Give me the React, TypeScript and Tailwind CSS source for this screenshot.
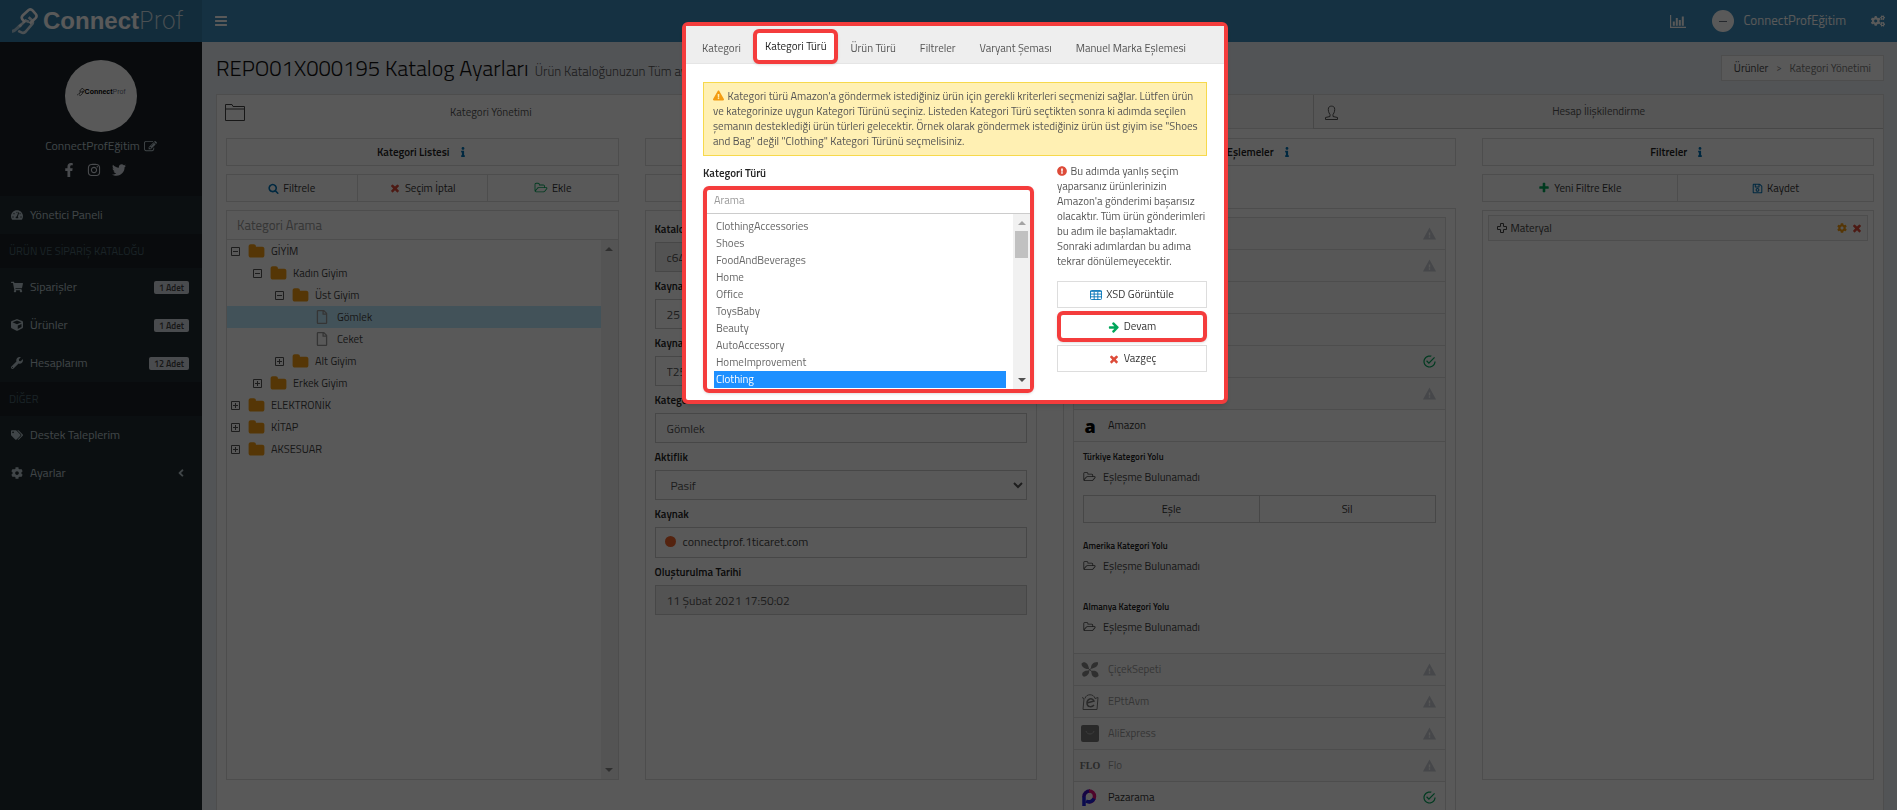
import { useState } from "react";
import type { ReactNode } from "react";
import {
  FaAngleLeft,
  FaCog,
  FaCogs,
  FaCube,
  FaExclamationCircle,
  FaExclamationTriangle,
  FaFacebookF,
  FaInfo,
  FaInstagram,
  FaRegFile,
  FaRegSave,
  FaShoppingCart,
  FaSyncAlt,
  FaTachometerAlt,
  FaTags,
  FaTwitter,
  FaWrench,
} from "react-icons/fa";
import { IoMdCheckmarkCircleOutline, IoMdWarning } from "react-icons/io";

const ICONS = {
  times:
    "M1490 1322q0 40-28 68l-136 136q-28 28-68 28t-68-28l-294-294-294 294q-28 28-68 28t-68-28l-136-136q-28-28-28-68t28-68l294-294-294-294q-28-28-28-68t28-68l136-136q28-28 68-28t68 28l294 294 294-294q28-28 68-28t68 28l136 136q28 28 28 68t-28 68l-294 294 294 294q28 28 28 68z",
  search:
    "M1216 832q0-185-131.5-316.5t-316.5-131.5-316.5 131.5-131.5 316.5 131.5 316.5 316.5 131.5 316.5-131.5 131.5-316.5zm512 832q0 52-38 90t-90 38q-54 0-90-38l-343-342q-179 124-399 124-143 0-273.5-55.5t-225-150-150-225-55.5-273.5 55.5-273.5 150-225 225-150 273.5-55.5 273.5 55.5 225 150 150 225 55.5 273.5q0 220-124 399l343 343q37 37 37 90z",
  folderOpen:
    "M1845 931q0-35-53-35h-1088q-40 0-85.5 21.5t-71.5 52.5l-294 363q-18 24-18 40 0 35 53 35h1088q40 0 86-22t71-53l294-363q18-22 18-39zm-1141-163h768v-160q0-40-28-68t-68-28h-576q-40 0-68-28t-28-68v-64q0-40-28-68t-68-28h-320q-40 0-68 28t-28 68v853l256-315q44-53 116-87.5t140-34.5zm1269 163q0 62-46 120l-295 363q-43 53-116 87.5t-140 34.5h-1088q-92 0-158-66t-66-158v-960q0-92 66-158t158-66h320q92 0 158 66t66 158v32h544q92 0 158 66t66 158v160h192q54 0 99 24.5t67 70.5q15 32 15 68z",
  folder:
    "M1728 608v704q0 92-66 158t-158 66h-1216q-92 0-158-66t-66-158v-960q0-92 66-158t158-66h320q92 0 158 66t66 158v32h672q92 0 158 66t66 158z",
  plus: "M1600 736v192q0 40-28 68t-68 28h-416v416q0 40-28 68t-68 28h-192q-40 0-68-28t-28-68v-416h-416q-40 0-68-28t-28-68v-192q0-40 28-68t68-28h416v-416q0-40 28-68t68-28h192q40 0 68 28t28 68v416h416q40 0 68 28t28 68z",
  arrowRight:
    "M1600 960q0 54-37 91l-651 651q-39 37-91 37-51 0-90-37l-75-75q-38-38-38-91t38-91l293-293h-704q-52 0-84.5-37.5t-32.5-90.5v-128q0-53 32.5-90.5t84.5-37.5h704l-293-294q-38-36-38-90t38-90l75-75q38-38 90-38 53 0 91 38l651 651q37 35 37 90z",
  edit: "M888 1184l116-116-152-152-116 116v56h96v96h56zm440-720q-16-16-33 1l-350 350q-17 17-1 33t33-1l350-350q17-17 1-33zm80 594v190q0 119-84.5 203.5t-203.5 84.5h-832q-119 0-203.5-84.5t-84.5-203.5v-832q0-119 84.5-203.5t203.5-84.5h832q63 0 117 25 15 7 18 23 3 17-9 29l-49 49q-14 14-32 8-23-6-45-6h-832q-66 0-113 47t-47 113v832q0 66 47 113t113 47h832q66 0 113-47t47-113v-126q0-13 9-22l64-64q15-15 35-7t20 29zm-96-738l288 288-672 672h-288v-288zm444 132l-92 92-288-288 92-92q28-28 68-28t68 28l152 152q28 28 28 68t-28 68z",
  bars: "M1664 1344v128q0 26-19 45t-45 19h-1408q-26 0-45-19t-19-45v-128q0-26 19-45t45-19h1408q26 0 45 19t19 45zm0-512v128q0 26-19 45t-45 19h-1408q-26 0-45-19t-19-45v-128q0-26 19-45t45-19h1408q26 0 45 19t19 45zm0-512v128q0 26-19 45t-45 19h-1408q-26 0-45-19t-19-45v-128q0-26 19-45t45-19h1408q26 0 45 19t19 45z",
};

function Icon({ name, className }: { name: keyof typeof ICONS; className: string }) {
  return (
    <svg
      viewBox={name === "folderOpen" ? "0 0 2048 1792" : "0 0 1792 1792"}
      className={`shrink-0 fill-current ${className}`}
    >
      <path d={ICONS[name]} />
    </svg>
  );
}

function TableIcon() {
  return (
    <svg viewBox="0 0 13 11" className="h-[10px] w-[12px] text-[#0073b7]" fill="none" stroke="currentColor">
      <rect x=".5" y=".5" width="12" height="10" rx="1" />
      <path d="M0 1.500h13M0 4.500h13M0 7.500h13M4.500 2v9M8.500 2v9" />
    </svg>
  );
}

function ChartIcon() {
  return (
    <svg viewBox="0 0 16 13" className="h-[13px] w-4 fill-current">
      <path d="M0 0h1.200v11.800H16V13H0zM2.800 6.500h2v4.300h-2zM5.800 3h2v7.800h-2zM8.800 5h2v5.800h-2zM11.800 1.500h2v9.300h-2z" />
    </svg>
  );
}

function ChainMark({ className }: { className: string }) {
  return (
    <svg viewBox="0 0 26 26" className={`shrink-0 ${className}`} fill="none" stroke="currentColor" strokeWidth="2.500">
      <path d="M0 22.500c4-.5 5-4 9-6.500" strokeWidth="3" opacity=".6" />
      <path d="M12.500 14l-2.500-3q-1.500-2 .5-4L16 2q2-1.500 4 .5l3 3.500q1.500 2-.5 4l-5.500 5" />
      <path d="M16 9l3.500 3q1.500 2-.5 4l-6 7q-2 1.500-4 .5l-3-1.500M7 18l6-6 3.500 1.500" opacity=".8" />
    </svg>
  );
}

interface MenuItem {
  icon: ReactNode;
  label: string;
  badge?: string;
  arrow?: boolean;
}

const catalogMenu: MenuItem[] = [
  { icon: <FaShoppingCart />, label: "Siparişler", badge: "1 Adet" },
  { icon: <FaCube />, label: "Ürünler", badge: "1 Adet" },
  { icon: <FaWrench />, label: "Hesaplarım", badge: "12 Adet" },
];

const otherMenu: MenuItem[] = [
  { icon: <FaTags />, label: "Destek Taleplerim" },
  { icon: <FaCog />, label: "Ayarlar", arrow: true },
];

function MenuLink({ icon, label, badge, arrow }: MenuItem) {
  return (
    <a href="#" className="flex h-[38px] items-center gap-[7px] pl-[11px] pr-[13px] text-[12px] text-[#b8c7ce]">
      {icon}
      <span className="flex-1">{label}</span>
      {badge && (
        <span className="rounded-xs bg-[#d2d6de] px-[5px] text-[9px] leading-[13px] font-semibold text-[#444]">
          {badge}
        </span>
      )}
      {arrow && <FaAngleLeft className="mr-[2px]" />}
    </a>
  );
}

function Sidebar() {
  return (
    <aside className="w-[202px] shrink-0 bg-[#222d32]">
      <div className="flex h-[154px] flex-col items-center bg-[#1a2226] pt-[18px] text-[#b8c7ce]">
        <div className="flex size-[72px] items-center justify-center rounded-full bg-white pb-2 font-['Liberation_Sans'] text-[7px] text-gray-500">
          <ChainMark className="size-[8px] text-black" />
          <span>
            <b className="text-black">Connect</b>Prof
          </span>
        </div>
        <a href="#" className="mt-[6px] flex items-center gap-1 text-[12px] leading-4">
          ConnectProfEğitim
          <Icon name="edit" className="size-[13px]" />
        </a>
        <div className="mt-[9px] mr-[14px] flex items-center gap-[11px] text-[14px] text-[#d2d6de]">
          <a href="#" aria-label="Facebook"><FaFacebookF /></a>
          <a href="#" aria-label="Instagram"><FaInstagram /></a>
          <a href="#" aria-label="Twitter"><FaTwitter /></a>
        </div>
      </div>
      <nav>
        <MenuLink icon={<FaTachometerAlt />} label="Yönetici Paneli" />
        <div className="flex h-[34px] items-center bg-[#1a2226] pl-[9px] text-[11px] text-[#4b646f]">
          ÜRÜN VE SİPARİŞ KATALOĞU
        </div>
        {catalogMenu.map((item) => (
          <MenuLink key={item.label} {...item} />
        ))}
        <div className="flex h-[34px] items-center bg-[#1a2226] pl-[9px] text-[11px] text-[#4b646f]">
          DİĞER
        </div>
        {otherMenu.map((item) => (
          <MenuLink key={item.label} {...item} />
        ))}
      </nav>
    </aside>
  );
}

function TopBar() {
  return (
    <header className="flex h-[42px] shrink-0 bg-[#3c8dbc] text-white">
      <a href="#" className="flex w-[202px] shrink-0 items-center gap-1 bg-[#367fa9] pl-3 text-[24px]">
        <ChainMark className="size-[27px]" />
        <span className="font-['Liberation_Sans']">
          <b>Connect</b>
          <span className="font-['Inter'] text-[24px] font-extralight opacity-80">Prof</span>
        </span>
      </a>
      <div className="flex flex-1 items-center px-3">
        <button aria-label="Menü">
          <Icon name="bars" className="size-[14px]" />
        </button>
        <div className="ml-auto flex items-center text-[13px]">
          <ChartIcon />
          <span className="ml-[26px] flex size-[22px] items-center justify-center rounded-full bg-white">
            <span className="h-px w-2 bg-gray-500" />
          </span>
          <span className="ml-[9px]">ConnectProfEğitim</span>
          <FaCogs className="ml-[25px] text-[14px]" />
        </div>
      </div>
    </header>
  );
}

function ColumnTitle({ children }: { children?: ReactNode }) {
  return (
    <h3 className="flex h-[28px] items-center justify-center gap-2 border border-[#ddd] text-[11px] font-semibold text-[#222]">
      {children}
      <FaInfo className="text-[10px] text-[#0073b7]" />
    </h3>
  );
}

function ButtonRow({ children }: { children: ReactNode }) {
  return <div className="mt-2 flex h-[28px] divide-x divide-[#ddd] border border-[#ddd]">{children}</div>;
}

function RowButton({ children }: { children?: ReactNode }) {
  return (
    <button className="flex flex-1 items-center justify-center gap-1 text-[11px] text-[#333]">{children}</button>
  );
}

interface TreeNode {
  label: string;
  depth: number;
  kind: "open" | "closed" | "file";
  selected?: boolean;
}

const tree: TreeNode[] = [
  { label: "GİYİM", depth: 0, kind: "open" },
  { label: "Kadın Giyim", depth: 1, kind: "open" },
  { label: "Üst Giyim", depth: 2, kind: "open" },
  { label: "Gömlek", depth: 3, kind: "file", selected: true },
  { label: "Ceket", depth: 3, kind: "file" },
  { label: "Alt Giyim", depth: 2, kind: "closed" },
  { label: "Erkek Giyim", depth: 1, kind: "closed" },
  { label: "ELEKTRONİK", depth: 0, kind: "closed" },
  { label: "KİTAP", depth: 0, kind: "closed" },
  { label: "AKSESUAR", depth: 0, kind: "closed" },
];

function TreeRow({ label, depth, kind, selected }: TreeNode) {
  return (
    <li
      className={`flex h-[22px] items-center text-[11px] text-[#444] ${selected ? "bg-[#beebff]" : ""}`}
      style={{ paddingLeft: 4 + depth * 22 }}
    >
      {kind === "file" ? (
        <FaRegFile className="ml-[18px] mr-[8px] text-[14px] text-[#999]" />
      ) : (
        <>
          <svg viewBox="0 0 9 9" className="mr-2 size-[9px]" fill="none" stroke="#555">
            <path d={kind === "open" ? "M.5.5h8v8h-8zM2 4.500h5" : "M.5.5h8v8h-8zM2 4.500h5M4.500 2v5"} />
          </svg>
          <Icon name="folder" className="mr-[6px] size-[17px] text-[#f39c12]" />
        </>
      )}
      {label}
    </li>
  );
}

function Arrow({ up, className }: { up?: boolean; className: string }) {
  return (
    <svg viewBox="0 0 8 4" className={`h-1 w-2 fill-current ${className}`}>
      <path d={up ? "M0 4l4-4 4 4z" : "M0 0l4 4 4-4z"} />
    </svg>
  );
}

function CategoryColumn() {
  return (
    <section>
      <ColumnTitle>Kategori Listesi</ColumnTitle>
      <ButtonRow>
        <RowButton><Icon name="search" className="size-[11px] text-[#0073b7]" />Filtrele</RowButton>
        <RowButton><Icon name="times" className="size-[12px] text-[#dd4b39]" />Seçim İptal</RowButton>
        <RowButton><Icon name="folderOpen" className="h-[12px] w-[14px] text-[#00a65a]" />Ekle</RowButton>
      </ButtonRow>
      <input
        aria-label="Kategori Arama"
        placeholder="Kategori Arama"
        className="mt-2 block h-[30px] w-full border border-[#ddd] px-[10px] text-[13px] placeholder:text-[#999]"
      />
      <div className="flex h-[540px] border border-t-0 border-[#ddd]">
        <ul className="flex-1">
          {tree.map((node) => (
            <TreeRow key={node.label} {...node} />
          ))}
        </ul>
        <div className="flex w-[17px] flex-col items-center justify-between bg-[#f1f1f1] py-[7px]">
          <Arrow up className="text-[#888]" />
          <Arrow className="text-[#888]" />
        </div>
      </div>
    </section>
  );
}

const inputClass = "block h-[30px] w-full border border-[#ccc] px-[11px] text-[12px] text-[#555]";

function Field({ id, label, children }: { id: string; label: string; children: ReactNode }) {
  return (
    <div className="mb-[7px]">
      <label htmlFor={id} className="mb-[6px] block text-[11px] leading-[14px] font-semibold text-[#222]">
        {label}
      </label>
      {children}
    </div>
  );
}

function DetailColumn() {
  return (
    <section>
      <ColumnTitle />
      <ButtonRow>
        <RowButton><FaSyncAlt className="text-[#0073b7]" />Güncelle</RowButton>
        <RowButton />
        <RowButton />
      </ButtonRow>
      <form className="mt-2 h-[570px] border border-[#ddd] px-[9px] pt-[11px]">
        <Field id="katalog" label="Katalog">
          <input id="katalog" readOnly value="c64" className={`${inputClass} bg-[#eee]`} />
        </Field>
        <Field id="kaynak-id" label="Kaynak">
          <input id="kaynak-id" defaultValue="25" className={inputClass} />
        </Field>
        <Field id="kaynak-kod" label="Kaynak">
          <input id="kaynak-kod" defaultValue="T25" className={inputClass} />
        </Field>
        <Field id="kategori" label="Kategori">
          <input id="kategori" defaultValue="Gömlek" className={inputClass} />
        </Field>
        <Field id="aktiflik" label="Aktiflik">
          <select id="aktiflik" className={`${inputClass} pr-0`}>
            <option>Pasif</option>
          </select>
        </Field>
        <Field id="kaynak" label="Kaynak">
          <div className="flex h-[31px] items-center gap-[7px] border border-[#ccc] px-[9px] pb-[2px] text-[12px] text-[#444]">
            <span className="size-[11px] rounded-full bg-[#f0642d]" />
            <output id="kaynak">connectprof.1ticaret.com</output>
          </div>
        </Field>
        <Field id="tarih" label="Oluşturulma Tarihi">
          <input id="tarih" readOnly value="11 Şubat 2021 17:50:02" className={`${inputClass} bg-[#eee]`} />
        </Field>
      </form>
    </section>
  );
}

interface MarketRowProps {
  name?: string;
  logo?: ReactNode;
  status?: "warn" | "ok";
  active?: boolean;
}

function MarketRow({ name, logo, status, active }: MarketRowProps) {
  return (
    <li
      className={`flex h-[32px] items-center border-b border-[#ddd] pl-[5px] pr-2 text-[11px] ${
        active ? "text-[#333]" : "bg-[#f9f9f9] text-[#999]"
      }`}
    >
      <span className="mr-[7px] flex size-[22px] items-center justify-center">{logo}</span>
      <span className="flex-1">{name}</span>
      {status === "warn" && <IoMdWarning className="text-[15px] text-[#c8ccd4]" />}
      {status === "ok" && <IoMdCheckmarkCircleOutline className="text-[15px] text-[#00a65a]" />}
    </li>
  );
}

function CategoryPath({ country }: { country: string }) {
  return (
    <>
      <h4 className="text-[9px] leading-[14px] font-semibold text-[#222]">{country} Kategori Yolu</h4>
      <p className="mt-[5px] flex items-center gap-[7px] text-[11px] leading-4 text-[#444]">
        <Icon name="folderOpen" className="h-[12px] w-[13px]" />
        Eşleşme Bulunamadı
      </p>
    </>
  );
}

function CicekLogo() {
  return (
    <svg viewBox="0 0 20 18" className="h-[17px] w-5 fill-[#888]">
      <path d="M9 8.500C4 9 1 6 1 3c2-3 7-2 8 5.500zM11 8c0-4 2-7 7-7 2 3-2 7-7 7zM9 10c1 4-3 7-6 6.500C0 14 2 9.500 9 10zM11.500 10.500c5-1 8 2 7.500 5.500-3 3-8 1-7.500-5.500z" />
      <path d="M7 7l6 5M12 7l-5 5" stroke="#888" />
    </svg>
  );
}

function PttLogo() {
  return (
    <svg viewBox="0 0 18 18" className="size-[18px]" fill="none" stroke="#777">
      <path d="M1 4.500l2 1-1 11h14l1-12-3 1C13 .5 5 .5 4 5.500" />
      <path d="M6 10l7-2c-2-4-7-2-7 2 0 4.500 5 4.500 7 2" strokeWidth="1.500" />
    </svg>
  );
}

function AliLogo() {
  return (
    <svg viewBox="0 0 18 17" className="h-[17px] w-[18px]" fill="none">
      <rect width="18" height="17" rx="2" fill="#777" />
      <path d="M5 6c1 4 7 4 8 0" stroke="#aaa" />
    </svg>
  );
}

function PazaramaLogo() {
  return (
    <svg viewBox="0 0 16 17" className="h-[17px] w-4" fill="none" strokeWidth="3.500">
      <path d="M2 17V7.500" stroke="#2020e0" />
      <path d="M2 8a6 5.500 0 016-6" stroke="#4010c0" />
      <path d="M7 2a5.500 5.500 0 010 11" stroke="#e0107a" />
      <path d="M12 9.500A5.500 5.500 0 014 12" stroke="#2020e0" />
    </svg>
  );
}

function MappingColumn() {
  return (
    <section>
      <ColumnTitle>Eşlemeler</ColumnTitle>
      <div className="mt-[42px] border border-[#ddd] px-[9px] pt-[8px]">
        <ul className="border border-[#ddd]">
          <MarketRow status="warn" />
          <MarketRow status="warn" />
          <MarketRow />
          <MarketRow />
          <MarketRow status="ok" />
          <MarketRow status="warn" />
          <MarketRow
            name="Amazon"
            active
            logo={<span className="font-['Open_Sans'] text-[18px] leading-none font-extrabold text-black">a</span>}
          />
          <li className="border-b border-[#ddd] px-[9px] pt-[8px] pb-[18px]">
            <CategoryPath country="Türkiye" />
            <div className="mt-[10px] mb-4 flex h-[28px] divide-x divide-[#ccc] border border-[#ccc]">
              <RowButton>Eşle</RowButton>
              <RowButton>Sil</RowButton>
            </div>
            <CategoryPath country="Amerika" />
            <div className="h-[26px]" />
            <CategoryPath country="Almanya" />
          </li>
          <MarketRow name="ÇiçekSepeti" logo={<CicekLogo />} status="warn" />
          <MarketRow name="EPttAvm" logo={<PttLogo />} status="warn" />
          <MarketRow name="AliExpress" logo={<AliLogo />} status="warn" />
          <MarketRow
            name="Flo"
            status="warn"
            logo={<span className="font-['Liberation_Serif'] text-[10px] font-bold text-[#777]">FLO</span>}
          />
          <MarketRow name="Pazarama" logo={<PazaramaLogo />} status="ok" active />
        </ul>
      </div>
    </section>
  );
}

function FilterColumn() {
  return (
    <section>
      <ColumnTitle>Filtreler</ColumnTitle>
      <ButtonRow>
        <RowButton><Icon name="plus" className="size-[12px] text-[#00a65a]" />Yeni Filtre Ekle</RowButton>
        <RowButton><FaRegSave className="text-[#0073b7]" />Kaydet</RowButton>
      </ButtonRow>
      <div className="mt-2 h-[570px] border border-[#ddd] px-[5px] pt-1">
        <div className="flex h-[26px] items-center gap-1 border border-[#ddd] bg-[#f9f9f9] pr-1 pl-2 text-[11px] text-[#444]">
          <svg viewBox="0 0 10 10" className="size-[10px]" fill="none" stroke="currentColor">
            <path d="M3.500.5h3v3h3v3h-3v3h-3v-3h-3v-3h3z" strokeLinejoin="round" />
          </svg>
          <span className="flex-1">Materyal</span>
          <button aria-label="Ayarlar"><FaCog className="text-[10px] text-[#f39c12]" /></button>
          <button aria-label="Sil"><Icon name="times" className="size-[12px] text-[#dd4b39]" /></button>
        </div>
      </div>
    </section>
  );
}

function Content() {
  return (
    <main className="min-w-0 flex-1 bg-[#ecf0f5] pl-[14px] pr-[13px]">
      <div className="flex h-[52px] items-center justify-between">
        <h1 className="flex items-baseline gap-[6px] text-[22px] font-light text-[#111]">
          REPO01X000195 Katalog Ayarları
          <small className="text-[13px] text-[#555]">Ürün Kataloğunuzun Tüm ayarları</small>
        </h1>
        <nav className="flex h-[26px] items-center gap-2 border border-[#ddd] bg-white px-3 text-[11px] text-[#777]">
          <a href="#" className="text-[#444]">Ürünler</a>
          <span className="text-[9px]">&gt;</span>
          <span>Kategori Yönetimi</span>
        </nav>
      </div>
      <div className="border border-b-0 border-[#ddd] bg-white">
        <div className="flex h-[34px] text-[11px] text-[#555]">
          <button className="relative flex-1">
            <svg viewBox="0 0 20 17" className="absolute top-[9px] left-2 h-[17px] w-5" fill="none" stroke="#444">
              <path d="M.5.5h6.500l1 2h11.500v14h-19zM.5 5h19" />
            </svg>
            Kategori Yönetimi
          </button>
          <button className="flex-1 border-b border-l border-[#ddd] bg-[#f5f5f5]" aria-label="Eşleme" />
          <button className="relative w-[34.2%] border-b border-l border-[#ccc] bg-[#f5f5f5]">
            <svg viewBox="0 0 14 15" className="absolute top-[10px] left-[10px] size-[15px]" fill="none" stroke="#555">
              <path d="M5.500 9.500C4 7.500 3.500 5 4 3 4.500.5 9.500.5 10 3c.5 2 0 4.500-1.500 6.500v2l4.500 1v2H1v-2l4.500-1z" />
            </svg>
            Hesap İlişkilendirme
          </button>
        </div>
        <div className="grid grid-cols-4 gap-[26px] px-[9px] pt-[9px]">
          <CategoryColumn />
          <DetailColumn />
          <MappingColumn />
          <FilterColumn />
        </div>
      </div>
    </main>
  );
}

const productTypes = [
  "ClothingAccessories",
  "Shoes",
  "FoodAndBeverages",
  "Home",
  "Office",
  "ToysBaby",
  "Beauty",
  "AutoAccessory",
  "HomeImprovement",
  "Clothing",
];

const wizardTabs = ["Kategori", "Kategori Türü", "Ürün Türü", "Filtreler", "Varyant Şeması", "Manuel Marka Eşlemesi"];

function CategoryTypeModal() {
  const [type, setType] = useState("Clothing");

  return (
    <div role="dialog" className="w-[546px] rounded-md border-4 border-[#f43c3c] bg-white shadow-md">
      <div className="flex h-[38px] items-center border-b border-[#e5e5e5] bg-[#eee] pt-1 pl-1 text-[11px] whitespace-nowrap text-[#555]">
        {wizardTabs.map((tab) =>
          tab === "Kategori Türü" ? (
            <button
              key={tab}
              className="h-[35px] rounded-md border-4 border-[#f43c3c] bg-white px-2 text-[#222] shadow-sm"
            >
              {tab}
            </button>
          ) : (
            <button key={tab} className="px-3 pt-[3px]">
              {tab}
            </button>
          )
        )}
      </div>
      <div className="px-[17px] pt-[18px] pb-[7px]">
        <p className="border border-[#f7d94c] bg-[#fff0b3] py-[6px] pr-1 pl-[9px] text-[11px] leading-[15px] text-[#555]">
          <FaExclamationTriangle className="mr-px inline align-[-1px] text-[11px] text-[#f39c12]" /> Kategori türü
          Amazon'a göndermek istediğiniz ürün için gerekli kriterleri seçmenizi sağlar. Lütfen ürün ve kategorinize
          uygun Kategori Türünü seçiniz. Listeden Kategori Türü seçtikten sonra ki adımda seçilen şemanın desteklediği
          ürün türleri gelecektir. Örnek olarak göndermek istediğiniz ürün üst giyim ise "Shoes and Bag" değil
          "Clothing" Kategori Türünü seçmelisiniz.
        </p>
        <div className="mt-2 flex justify-between">
          <div className="w-[331px]">
            <label htmlFor="tur" className="block pt-[2px] pb-[5px] text-[11px] leading-[15px] font-semibold text-[#222]">
              Kategori Türü
            </label>
            <div className="rounded-md border-4 border-[#f43c3c] shadow-sm">
              <input
                aria-label="Arama"
                placeholder="Arama"
                className="block h-6 w-full border-b border-[#ccc] px-[7px] pb-[3px] text-[11px] placeholder:text-[#999]"
              />
              <div className="flex h-[175px]">
                <select
                  id="tur"
                  size={10}
                  value={type}
                  onChange={(e) => setType(e.target.value)}
                  className="flex-1 overflow-hidden px-[7px] pt-[4px] text-[11px] text-[#666]"
                >
                  {productTypes.map((t) => (
                    <option
                      key={t}
                      className="h-[17px] min-h-[17px] px-[2px] py-0 leading-[17px] checked:bg-[#1e90ff] checked:text-white"
                    >
                      {t}
                    </option>
                  ))}
                </select>
                <div className="flex w-[17px] flex-col items-center bg-[#f1f1f1] py-[7px]">
                  <Arrow up className="text-[#a3a3a3]" />
                  <div className="mt-[6px] h-[27px] w-[13px] bg-[#c1c1c1]" />
                  <Arrow className="mt-auto text-[#505050]" />
                </div>
              </div>
            </div>
          </div>
          <div className="flex w-[150px] flex-col">
            <p className="text-[11px] leading-[15px] text-[#555]">
              <FaExclamationCircle className="mr-px inline align-[-1px] text-[10px] text-[#dd4b39]" /> Bu adımda yanlış
              seçim yaparsanız ürünlerinizin Amazon'a gönderimi başarısız olacaktır. Tüm ürün gönderimleri bu adım ile
              başlamaktadır. Sonraki adımlardan bu adıma tekrar dönülemeyecektir.
            </p>
            <button className="mt-3 flex h-[27px] items-center justify-center gap-1 border border-[#ddd] text-[11px] text-[#333]">
              <TableIcon />
              XSD Görüntüle
            </button>
            <button className="my-[3px] flex h-[31px] items-center justify-center gap-1 rounded-md border-4 border-[#f43c3c] text-[11px] text-[#333] shadow-sm">
              <Icon name="arrowRight" className="size-[12px] text-[#00a65a]" />
              Devam
            </button>
            <button className="flex h-[27px] items-center justify-center gap-1 border border-[#ddd] text-[11px] text-[#333]">
              <Icon name="times" className="size-[12px] text-[#dd4b39]" />
              Vazgeç
            </button>
          </div>
        </div>
      </div>
    </div>
  );
}

export default function App() {
  return (
    <div className="flex h-screen flex-col overflow-hidden font-['Titillium_Web','Roboto_Condensed','Roboto',sans-serif]">
      <TopBar />
      <div className="flex min-h-0 flex-1">
        <Sidebar />
        <Content />
      </div>
      <div className="fixed inset-0 flex items-start justify-center bg-black/65 pt-[22px] pl-[13px]">
        <CategoryTypeModal />
      </div>
    </div>
  );
}
